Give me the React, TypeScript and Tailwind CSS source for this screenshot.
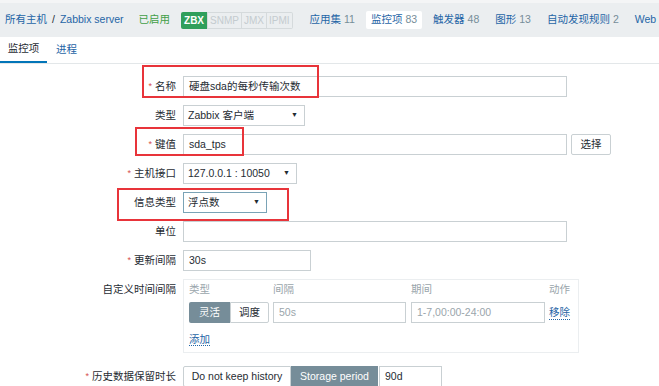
import React from 'react'

const font = { fontFamily: '"Liberation Sans", "Noto Sans CJK SC", sans-serif' }

const Req = () => <span className="text-[#d64e4e] mr-[3px] text-[9px]">*</span>

const Label = ({ text, req }: { text: string; req?: boolean }) => (
  <div className="h-[21px] flex items-center justify-end text-[10.5px] text-[#1f2c33] whitespace-nowrap">
    {req && <Req />}
    {text}
  </div>
)

const Input = ({ w, value, muted }: { w: string; value?: string; muted?: boolean }) => (
  <div
    className={`${w} h-[21px] border border-[#c9d0d3] bg-white flex items-center px-[5px] text-[10.5px] whitespace-nowrap ${
      muted ? 'text-[#9aa5ab]' : 'text-[#1f2c33]'
    }`}
  >
    {value}
  </div>
)

const Select = ({ w, value, focus }: { w: string; value: string; focus?: boolean }) => (
  <div
    className={`${w} h-[21px] border ${
      focus ? 'border-[#7aa3b6]' : 'border-[#c9d0d3]'
    } bg-white flex items-center justify-between pl-[4px] pr-[6px] text-[10.5px] text-[#1f2c33] whitespace-nowrap`}
  >
    <span>{value}</span>
    <span className="text-[7px]">▼</span>
  </div>
)

const Nav = ({ name, count, active }: { name: string; count: string; active?: boolean }) => (
  <div className={`px-[5px] h-[18px] flex items-center rounded-[2px] ${active ? 'bg-white' : ''}`}>
    <span className="text-[#1f65a6]">{name}</span>
    {count && <span className="text-[#768d99] ml-[3px]">{count}</span>}
  </div>
)

export default function App() {
  return (
    <div className="relative w-[659px] h-[386px] overflow-hidden bg-white" style={font}>
      {/* header */}
      <div className="h-[3px] bg-[#f4f5f6]" />
      <div className="h-[34px] bg-[#ebeef0] flex items-center text-[10.5px] whitespace-nowrap">
        <span className="ml-[5px] text-[#1f65a6]">所有主机</span>
        <span className="mx-[5px] text-[#1f2c33]">/</span>
        <span className="text-[#1f65a6]">Zabbix server</span>
        <span className="ml-[15px] text-[#429e47]">已启用</span>
        <div className="ml-[11px] flex text-[10px] h-[17px]">
          <span className="bg-[#2f9f5b] text-white px-[3px] flex items-center rounded-l-[2px] font-bold">ZBX</span>
          <span className="border border-[#d5dadc] text-[#c4cbcf] px-[2px] flex items-center">SNMP</span>
          <span className="border-y border-r border-[#d5dadc] text-[#c4cbcf] px-[2px] flex items-center">JMX</span>
          <span className="border-y border-r border-[#d5dadc] text-[#c4cbcf] px-[2px] flex items-center rounded-r-[2px]">IPMI</span>
        </div>
        <div className="ml-[12px] flex gap-[6px]">
          <Nav name="应用集" count="11" />
          <Nav name="监控项" count="83" active />
          <Nav name="触发器" count="48" />
          <Nav name="图形" count="13" />
          <Nav name="自动发现规则" count="2" />
          <Nav name="Web 场景" count="" />
        </div>
      </div>

      {/* tabs */}
      <div className="h-[27px] flex text-[10.5px] border-b border-[#e3e7e9]">
        <div className="w-[47px] flex items-center justify-center text-[#1f2c33] border-b-2 border-[#0275b8]">
          监控项
        </div>
        <div className="ml-[3px] px-[6px] flex items-center text-[#1f65a6]">进程</div>
      </div>

      {/* form */}
      <div className="pt-[12px] grid grid-cols-[176px_1fr] gap-x-[7px] gap-y-[8px] items-start">
        <Label text="名称" req />
        <Input w="w-[384px]" value="硬盘sda的每秒传输次数" />

        <Label text="类型" />
        <Select w="w-[122px]" value="Zabbix 客户端" />

        <Label text="键值" req />
        <div className="flex gap-[4px]">
          <Input w="w-[384px]" value="sda_tps" />
          <div className="h-[21px] w-[40px] border border-[#c9d0d3] rounded-[2px] bg-white flex items-center justify-center text-[10.5px] text-[#1f2c33]">
            选择
          </div>
        </div>

        <Label text="主机接口" req />
        <Select w="w-[114px]" value="127.0.0.1 : 10050" />

        <Label text="信息类型" />
        <Select w="w-[84px]" value="浮点数" focus />

        <Label text="单位" />
        <Input w="w-[384px]" />

        <Label text="更新间隔" req />
        <Input w="w-[128px]" value="30s" />

        <div className="h-[20px] mt-[1px] flex items-center justify-end text-[10.5px] text-[#1f2c33]">自定义时间间隔</div>
        <div className="w-[396px] border border-[#ebeef0] px-[5px] pb-[6px] text-[10.5px]">
          <div className="flex text-[#9aa5ab] h-[20px] items-center">
            <span className="w-[84px]">类型</span>
            <span className="w-[138px]">间隔</span>
            <span className="w-[138px]">期间</span>
            <span>动作</span>
          </div>
          <div className="flex items-center mt-[2px] h-[21px]">
            <div className="flex w-[84px]">
              <span className="w-[41px] h-[21px] bg-[#768d99] text-white flex items-center justify-center rounded-l-[2px]">灵活</span>
              <span className="w-[39px] h-[21px] border border-[#c9d0d3] text-[#1f2c33] flex items-center justify-center rounded-r-[2px]">调度</span>
            </div>
            <div className="w-[138px]">
              <Input w="w-[133px]" value="50s" muted />
            </div>
            <div className="w-[138px]">
              <Input w="w-[134px]" value="1-7,00:00-24:00" muted />
            </div>
            <span className="text-[#1f65a6] border-b border-dotted border-[#1f65a6] leading-[14px]">移除</span>
          </div>
          <div className="mt-[9px] h-[14px]">
            <span className="text-[#1f65a6] border-b border-dotted border-[#1f65a6] leading-[13px]">添加</span>
          </div>
        </div>

        <div className="mt-[5px]">
          <Label text="历史数据保留时长" req />
        </div>
        <div className="mt-[5px] flex h-[21px] text-[10.5px] whitespace-nowrap">
          <span className="w-[108px] border border-[#c9d0d3] flex items-center justify-center text-[#1f2c33] rounded-l-[2px]">
            Do not keep history
          </span>
          <span className="w-[87px] bg-[#768d99] text-white flex items-center justify-center">Storage period</span>
          <div className="ml-[1px]">
            <Input w="w-[63px]" value="90d" />
          </div>
        </div>
      </div>

      {/* red annotation boxes */}
      <div className="absolute left-[142px] top-[65px] w-[177px] h-[33px] border-2 border-[#e8343a]" />
      <div className="absolute left-[135px] top-[127px] w-[109px] h-[29px] border-2 border-[#e8343a]" />
      <div className="absolute left-[117px] top-[188px] w-[172px] h-[33px] border-2 border-[#e8343a]" />
    </div>
  )
}
